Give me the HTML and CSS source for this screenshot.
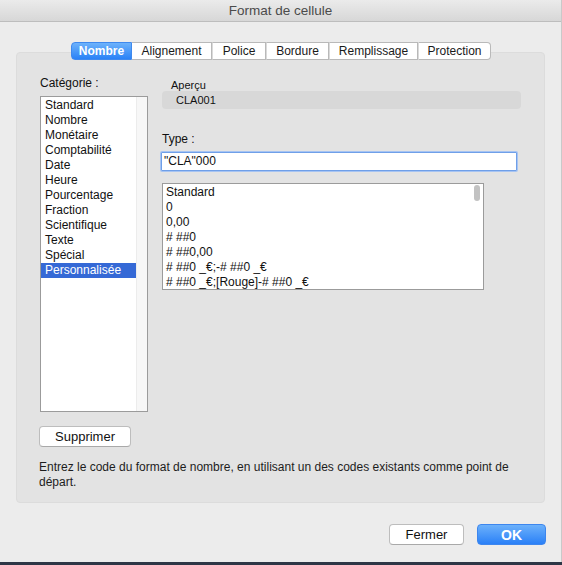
FILE: index.html
```html
<!DOCTYPE html>
<html lang="fr">
<head>
<meta charset="utf-8">
<title>Format de cellule</title>
<link rel="stylesheet" href="styles.css">
</head>
<body>
<div class="window">
  <div class="titlebar">Format de cellule</div>
  <div class="main">
    <div class="tabs">
      <div class="tab sel w60">Nombre</div>
      <div class="tab w80">Alignement</div>
      <div class="tab w53">Police</div>
      <div class="tab w62">Bordure</div>
      <div class="tab w88">Remplissage</div>
      <div class="tab w72 last">Protection</div>
    </div>
    <div class="panel">
      <div class="cols">
        <div class="left">
          <div class="label">Catégorie :</div>
          <div class="catlist">
            <ul class="items">
              <li>Standard</li>
              <li>Nombre</li>
              <li>Monétaire</li>
              <li>Comptabilité</li>
              <li>Date</li>
              <li>Heure</li>
              <li>Pourcentage</li>
              <li>Fraction</li>
              <li>Scientifique</li>
              <li>Texte</li>
              <li>Spécial</li>
              <li class="selected">Personnalisée</li>
            </ul>
            <div class="track"></div>
          </div>
        </div>
        <div class="right">
          <div class="preview-label">Aperçu</div>
          <div class="preview">CLA001</div>
          <div class="label type-label">Type :</div>
          <div class="input">"CLA"000</div>
          <div class="fmtlist">
            <ul class="items">
              <li>Standard</li>
              <li>0</li>
              <li>0,00</li>
              <li># ##0</li>
              <li># ##0,00</li>
              <li># ##0 _€;-# ##0 _€</li>
              <li># ##0 _€;[Rouge]-# ##0 _€</li>
            </ul>
            <div class="thumb"></div>
          </div>
        </div>
      </div>
      <button class="btn del">Supprimer</button>
      <p class="help">Entrez le code du format de nombre, en utilisant un des codes existants comme point de départ.</p>
    </div>
    <div class="footer">
      <button class="btn close">Fermer</button>
      <button class="btn primary">OK</button>
    </div>
  </div>
</div>
</body>
</html>
```

FILE: styles.css
```css
html, body {
  margin: 0;
  padding: 0;
}
body {
  width: 562px;
  height: 565px;
  background: #2e3646;
  font-family: "Liberation Sans", Arial, Helvetica, sans-serif;
  font-size: 12px;
  color: #111;
  overflow: hidden;
}
.window {
  width: 561px;
  height: 562px;
  background: #ececec;
  border-right: 1px solid #c9c9c9;
  display: flex;
  flex-direction: column;
}
.titlebar {
  height: 21px;
  line-height: 21px;
  text-align: center;
  font-size: 13.5px;
  color: #4b4b4b;
  background: linear-gradient(#ebebeb, #d7d7d7);
  border-bottom: 1px solid #bdbdbd;
}
.main {
  display: flex;
  flex-direction: column;
}
.tabs {
  display: flex;
  justify-content: center;
  margin-top: 20px;
  margin-left: 1px;
  position: relative;
  z-index: 1;
}
.tab {
  height: 16px;
  line-height: 16px;
  text-align: center;
  background: #fff;
  border: 1px solid #b9b9b9;
  border-left: none;
  color: #1a1a1a;
  box-sizing: content-box;
}
.tab + .tab {
  border-left: 1px solid #dadada;
}
.tab.sel + .tab {
  border-left: none;
}
.tab.sel {
  background: linear-gradient(#6db2fb, #2a82f7);
  border-color: #3f89ee;
  border-left: 1px solid #3f89ee;
  color: #fff;
  border-radius: 4px 0 0 4px;
  font-weight: bold;
}
.tab.last {
  border-radius: 0 4px 4px 0;
}
.w60 { width: 59px; }
.w80 { width: 79px; }
.w53 { width: 52px; }
.w62 { width: 61px; }
.w88 { width: 87px; }
.w72 { width: 71px; }

.panel {
  margin: -8px 16px 0 16px;
  background: #e3e3e3;
  border: 1px solid #dcdcdc;
  border-radius: 4px;
  padding: 23px 23px 13px 23px;
  height: 413px;
}
.cols {
  display: flex;
  gap: 14px;
}
.label {
  line-height: 15px;
}
.catlist {
  margin-top: 5px;
  width: 106px;
  height: 314px;
  border: 1px solid #9b9b9b;
  background: #fff;
  display: flex;
}
.items {
  list-style: none;
  margin: 0;
  padding: 1px 0 0 0;
  flex: 1;
}
.items li {
  line-height: 15px;
  padding-left: 4px;
  white-space: nowrap;
}
.items li.selected {
  background: #3569d6;
  color: #fff;
}
.track {
  width: 10px;
  background: #f7f7f7;
  border-left: 1px solid #ececec;
}
.right {
  display: flex;
  flex-direction: column;
  width: 360px;
}
.preview-label {
  font-size: 11px;
  line-height: 13px;
  margin: 3px 0 0 9px;
}
.preview {
  margin-top: -1px;
  width: 345px;
  height: 18px;
  line-height: 18px;
  font-size: 11px;
  padding-left: 14px;
  background: #d8d8d8;
  border-radius: 4px;
}
.type-label {
  margin-top: 23px;
}
.input {
  margin-top: 5px;
  margin-left: -1px;
  width: 350px;
  height: 17px;
  line-height: 17px;
  padding: 0 2px;
  background: #fff;
  border: 1px solid #6f9fe8;
  box-shadow: 0 0 0 1px #a7c4f2;
  border-radius: 1px;
}
.fmtlist {
  position: relative;
  margin-top: 12px;
  width: 320px;
  height: 105px;
  border: 1px solid #9b9b9b;
  background: #fff;
  overflow: hidden;
}
.fmtlist .items li {
  padding-left: 3px;
}
.thumb {
  position: absolute;
  right: 3px;
  top: 1px;
  width: 6px;
  height: 16px;
  border-radius: 3px;
  background: #c2c2c2;
}
.btn {
  font-family: "Liberation Sans", Arial, Helvetica, sans-serif;
  font-size: 13px;
  color: #111;
  background: #fff;
  border: 1px solid #bdbdbd;
  border-bottom-color: #a9a9a9;
  border-radius: 4px;
  height: 21px;
  padding: 0;
  margin: 0;
}
.del {
  display: block;
  margin-top: 14px;
  margin-left: -1px;
  width: 92px;
}
.help {
  margin: 13px 0 0 -1px;
  line-height: 15px;
  color: #1d1d1d;
  width: 470px;
}
.footer {
  display: flex;
  justify-content: flex-end;
  gap: 13px;
  margin: 21px 15px 0 0;
}
.close {
  width: 75px;
}
.primary {
  width: 69px;
  color: #fff;
  font-weight: bold;
  font-size: 14px;
  border: 1px solid #3d86ee;
  background: linear-gradient(#6cb1fb, #2a80f7);
}
```
